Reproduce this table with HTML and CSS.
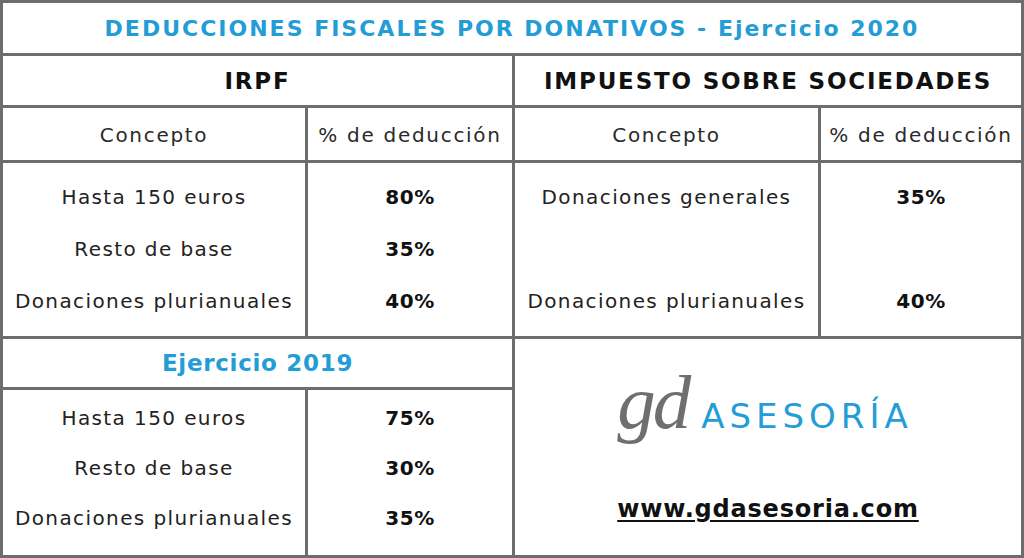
FILE: index.html
```html
<!DOCTYPE html>
<html lang="es">
<head>
<meta charset="utf-8">
<title>Deducciones fiscales por donativos</title>
<link rel="stylesheet" href="styles.css">
</head>
<body>
<div class="sheet">
  <div class="cell title">DEDUCCIONES FISCALES POR DONATIVOS - Ejercicio 2020</div>
  <div class="cell head span2">IRPF</div>
  <div class="cell head span2">IMPUESTO SOBRE SOCIEDADES</div>
  <div class="cell sub">Concepto</div>
  <div class="cell sub">% de deducción</div>
  <div class="cell sub">Concepto</div>
  <div class="cell sub">% de deducción</div>
  <div class="cell list">
    <div class="line">Hasta 150 euros</div>
    <div class="line">Resto de base</div>
    <div class="line">Donaciones plurianuales</div>
  </div>
  <div class="cell list pct">
    <div class="line">80%</div>
    <div class="line">35%</div>
    <div class="line">40%</div>
  </div>
  <div class="cell list">
    <div class="line">Donaciones generales</div>
    <div class="line"></div>
    <div class="line">Donaciones plurianuales</div>
  </div>
  <div class="cell list pct">
    <div class="line">35%</div>
    <div class="line"></div>
    <div class="line">40%</div>
  </div>
  <div class="cell year span2">Ejercicio 2019</div>
  <div class="cell logo">
    <div class="brand"><span class="gd">gd</span><span class="ases">ASESORÍA</span></div>
    <div class="url">www.gdasesoria.com</div>
  </div>
  <div class="cell list2">
    <div class="line">Hasta 150 euros</div>
    <div class="line">Resto de base</div>
    <div class="line">Donaciones plurianuales</div>
  </div>
  <div class="cell list2 pct">
    <div class="line">75%</div>
    <div class="line">30%</div>
    <div class="line">35%</div>
  </div>
</div>
</body>
</html>
```

FILE: styles.css
```css
html, body {
  margin: 0;
  padding: 0;
  background: #ffffff;
}

.sheet {
  box-sizing: border-box;
  width: 1024px;
  height: 558px;
  display: grid;
  grid-template-columns: 302px 204px 303px 200px;
  grid-template-rows: 50px 49px 52px 173px 48px 165px;
  gap: 3px;
  padding: 3px;
  background: #6d6d6d;
  font-family: "DejaVu Sans", "Noto Sans", sans-serif;
  color: #1e1e1e;
}

.cell {
  background: #ffffff;
  display: flex;
  align-items: center;
  justify-content: center;
  white-space: nowrap;
}

.span2 {
  grid-column: span 2;
}

.title {
  grid-column: 1 / 5;
  color: #249dd6;
  font-weight: bold;
  font-size: 22px;
  letter-spacing: 2px;
}

.head {
  font-weight: bold;
  font-size: 23px;
  color: #111111;
  letter-spacing: 1.8px;
}

.sub {
  font-size: 20px;
  letter-spacing: 1.7px;
  color: #2a2a2a;
  padding-top: 1px;
}

.list, .list2 {
  flex-direction: column;
  justify-content: flex-start;
  font-size: 20px;
  letter-spacing: 1.4px;
  color: #222222;
}

.list {
  padding-top: 8px;
}

.list .line {
  height: 52px;
  line-height: 52px;
}

.list2 {
  padding-top: 3px;
}

.list2 .line {
  height: 50px;
  line-height: 50px;
}

.pct {
  font-weight: bold;
  color: #111111;
  letter-spacing: 0.5px;
}

.year {
  color: #249dd6;
  font-weight: bold;
  font-size: 23px;
  letter-spacing: 0.7px;
}

.logo {
  grid-column: 3 / 5;
  grid-row: 5 / 7;
  flex-direction: column;
  justify-content: flex-start;
  padding-top: 25px;
}

.brand {
  display: flex;
  align-items: baseline;
  margin-left: -6px;
  height: 76px;
}

.gd {
  font-family: "Liberation Serif", "DejaVu Serif", serif;
  font-style: italic;
  font-size: 77px;
  color: #6f6f6f;
  letter-spacing: -3px;
  margin-right: 13px;
  line-height: 76px;
}

.ases {
  font-family: "DejaVu Sans", "Noto Sans", sans-serif;
  font-size: 34px;
  color: #249dd6;
  letter-spacing: 5px;
}

.url {
  margin-top: 55px;
  font-size: 24px;
  font-weight: bold;
  color: #111111;
  text-decoration: underline;
  text-decoration-thickness: 2px;
  text-underline-offset: 3px;
  letter-spacing: 0.8px;
}
```
